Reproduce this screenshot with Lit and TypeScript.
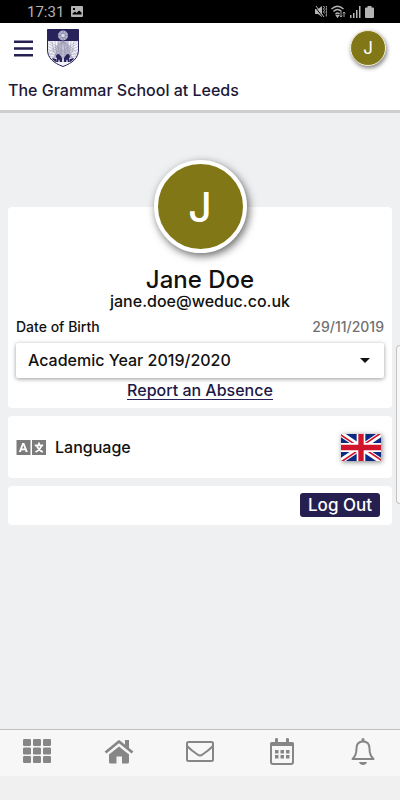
import { LitElement, html, css, svg } from "lit";
import { customElement } from "lit/decorators.js";

const rays = [-11, -8, -5, -2, 2, 5, 8, 11];

@customElement("status-bar")
class StatusBar extends LitElement {
  static styles = css`
    :host {
      display: flex;
      justify-content: space-between;
      align-items: center;
      height: 23px;
      padding: 0 26px 0 27px;
      background: #000;
      color: #b4b4b4;
      font: 15px/23px Roboto, sans-serif;
    }
    .time { padding-top: 2px; line-height: 21px; }
    .left, .right { display: flex; align-items: center; }
    .left { gap: 7px; }
    .right { gap: 4px; }
    svg { display: block; }
  `;
  render() {
    return html`
      <div class="left">
        <span class="time">17:31</span>
        <svg width="12" height="11" viewBox="0 0 12 11">
          <path fill="#b4b4b4" fill-rule="evenodd" d="M1 0h10a1 1 0 0 1 1 1v9a1 1 0 0 1-1 1H1a1 1 0 0 1-1-1V1a1 1 0 0 1 1-1zM1.500 8.500h9V6.500L8 4.500 5.500 7 4 5.500 1.500 7.500zM2 2v2h2V2z"/>
        </svg>
      </div>
      <div class="right">
        <svg width="12" height="13" viewBox="0 0 12 13" fill="#b4b4b4">
          <path d="M0 4h3l4-3v11L3 9H0z"/>
          <path d="M0 2l8 10" stroke="#000" stroke-width="1"/>
          <path d="M1 1l8 11M8.500 1l1 1.500-1 1.500 1 1.500-1 1.500 1 1.500M11 1l.8 1.500L11 4l.8 1.500L11 7l.8 1.500L11 10l.8 1.500" fill="none" stroke="#b4b4b4"/>
        </svg>
        <svg width="15" height="13" viewBox="0 0 15 13" fill="none" stroke="#b4b4b4" stroke-width="1.400">
          <path d="M.5 4q6-5.500 12 0M2.500 6.500q4-4 8 0M4.500 9q2-2 4 0"/>
          <path d="M5.500 10.500h2l-1 1.500z" fill="#b4b4b4"/>
          <path d="M10 7v5M8.800 10.500L10 12l1.200-1.500M13 12V7M11.800 8.500L13 7l1.200 1.500" stroke-width=".9"/>
        </svg>
        <svg width="11" height="12" viewBox="0 0 11 12" fill="#b4b4b4">
          <path d="M0 9h1.500v3H0zM3 7h1.500v5H3zM6 4h1.500v8H6zM9 0h1.500v12H9z"/>
        </svg>
        <svg width="9" height="12" viewBox="0 0 9 12" fill="#b4b4b4">
          <path d="M2.500 0h4v1.500H8a1 1 0 0 1 1 1V11a1 1 0 0 1-1 1H1a1 1 0 0 1-1-1V2.500a1 1 0 0 1 1-1h1.500z"/>
        </svg>
      </div>
    `;
  }
}

@customElement("school-header")
class SchoolHeader extends LitElement {
  static styles = css`
    :host {
      display: block;
      background: #fff;
      border-bottom: 3px solid #cdced0;
      padding: 4px 14px 0 8px;
    }
    .row { display: flex; align-items: center; height: 42px; }
    button { border: 0; background: none; padding: 0; cursor: pointer; display: block; }
    .menu { margin: 0 14px 0 6px; }
    svg { display: block; }
    .avatar {
      margin-left: auto;
      box-sizing: border-box;
      width: 36px;
      height: 36px;
      border: 1px solid #f3f1d8;
      border-radius: 50%;
      background: #827717;
      color: #fff;
      font: 400 17px/34px Inter, sans-serif;
      box-shadow: 1px 2px 4px rgba(0, 0, 0, 0.5);
    }
    h1 {
      margin: 0;
      height: 41px;
      font: 500 16px/42px Inter, sans-serif;
      color: #1c1937;
    }
  `;
  render() {
    return html`
      <div class="row">
        <button class="menu" aria-label="Menu">
          <svg width="19" height="17" viewBox="0 0 19 17" fill="#262050">
            <path d="M0 .5h19V3H0zM0 7.300h19v2.500H0zM0 14h19v2.500H0z"/>
          </svg>
        </button>
        <svg width="32" height="38" viewBox="0 0 32 38" role="img" aria-label="School crest">
          <defs>
            <clipPath id="shield"><path d="M.5.5h31V21c0 8-6 13-15.500 16.500C6.500 34 .5 29 .5 21z"/></clipPath>
          </defs>
          <g clip-path="url(#shield)">
            <path d="M0 0h32v38H0z" fill="#f4f4f8"/>
            <path d="M0 0h32v12H0z" fill="#29235c"/>
            <path d="M11 12h10l4 17H7z" fill="#c9c8d8"/>
            ${rays.map((n) => svg`<path d=${`M${16 + n} 12Q${16 + n} 21 ${16 + n * 0.5} 31M16 12L${16 + n * 2} 30M0 ${22 + n}L16 ${27 + n * 0.5}L32 ${22 + n}`} fill="none" stroke="#8d8aab" stroke-width=".45"/>`)}
            <circle cx="16" cy="6.500" r="5" fill="#b6b4cd"/>
            <path d="M16 1.500v10M11 6.500h10M12.500 3l7 7M19.500 3l-7 7" stroke="#77739a" stroke-width=".7"/>
            <circle cx="16" cy="6.500" r="2.200" fill="#dddce8" stroke="#77739a" stroke-width=".6"/>
            <path d="M9 28c0-3 2-4 4-2l2 3v4h-2l-1-3-1 3H9l1-4zM23 28c0-3-2-4-4-2l-2 3v4h2l1-3 1 3h2l-1-4z" fill="#29235c"/>
            <path d="M5 29l4 1v3l-3-2zM27 29l-4 1v3l3-2z" fill="#29235c"/>
          </g>
          <path d="M.5.5h31V21c0 8-6 13-15.500 16.500C6.500 34 .5 29 .5 21z" fill="none" stroke="#29235c"/>
        </svg>
        <button class="avatar" aria-label="Profile">J</button>
      </div>
      <h1>The Grammar School at Leeds</h1>
    `;
  }
}

@customElement("profile-card")
class ProfileCard extends LitElement {
  static styles = css`
    :host {
      display: block;
      background: #fff;
      border-radius: 4px;
      padding: 0 8px 8px;
      color: #111;
      font-family: Inter, sans-serif;
      font-weight: 500;
      text-align: center;
    }
    .avatar {
      box-sizing: border-box;
      width: 93px;
      height: 93px;
      margin: -47px auto 0;
      border: 4px solid #fff;
      border-radius: 50%;
      background: #827717;
      color: #fff;
      font-size: 41px;
      line-height: 87px;
      box-shadow: 2px 3px 8px rgba(0, 0, 0, 0.6);
    }
    h2 { margin: 13px 0 0; font-size: 24px; line-height: 27px; font-weight: 500; }
    .email { margin: 0; font-size: 16px; line-height: 16px; }
    dl {
      display: flex;
      justify-content: space-between;
      margin: 8px 0 6px;
      font-size: 14px;
      line-height: 20px;
    }
    dt, dd { margin: 0; }
    dd { color: #707070; }
    .year { position: relative; display: block; }
    select {
      display: block;
      width: 100%;
      height: 35px;
      padding: 0 12px 2px;
      border: 0;
      border-radius: 2px;
      appearance: none;
      background: #fff;
      color: #111;
      font: 500 16px/20px Inter, sans-serif;
      box-shadow: 0 1px 4px rgba(0, 0, 0, 0.4);
    }
    .caret { position: absolute; right: 14px; top: 15px; pointer-events: none; }
    a {
      display: inline-block;
      margin-top: 4px;
      border-bottom: 1px solid #29235c;
      color: #1d1845;
      text-decoration: none;
      font-size: 16px;
      line-height: 17px;
    }
    .absence { display: block; height: 22px; }
  `;
  render() {
    return html`
      <div class="avatar">J</div>
      <h2>Jane Doe</h2>
      <p class="email">jane.doe@weduc.co.uk</p>
      <dl><dt>Date of Birth</dt><dd>29/11/2019</dd></dl>
      <div class="year">
        <select aria-label="Academic year"><option>Academic Year 2019/2020</option></select>
        <svg class="caret" width="10" height="5" viewBox="0 0 10 5"><path d="M0 0h10L5 5z" fill="#111"/></svg>
      </div>
      <div class="absence"><a href="#absence">Report an Absence</a></div>
    `;
  }
}

@customElement("language-card")
class LanguageCard extends LitElement {
  static styles = css`
    :host {
      display: flex;
      align-items: center;
      box-sizing: border-box;
      height: 62px;
      padding: 0 11px 0 8px;
      background: #fff;
      border-radius: 4px;
      color: #111;
      font: 500 16px/20px Inter, sans-serif;
    }
    svg { display: block; }
    .label { margin-left: 9px; }
    button {
      margin-left: auto;
      padding: 0;
      border: 0;
      background: none;
      box-shadow: 1px 1px 5px rgba(0, 0, 0, 0.5);
      cursor: pointer;
    }
  `;
  render() {
    return html`
      <svg width="30" height="15" viewBox="0 0 30 15">
        <path d="M.5 0h14v15H.5zM16 0h14v15H16z" fill="#7c7c7c"/>
        <path d="M2.800 12L6.300 3h2l3.500 9H9.600L9 10.200H5.600L5 12zM6.200 8.500h2.200L7.300 5.200z" fill="#fff" fill-rule="evenodd"/>
        <path d="M23 2.500v2.500M18.800 5.300h8.400M25.500 5.500q-1.500 4.500-6 6.500M20.800 6q2 4.500 6 6" fill="none" stroke="#fff" stroke-width="1.800"/>
      </svg>
      <span class="label">Language</span>
      <button aria-label="English (United Kingdom)">
        <svg width="40" height="27" viewBox="0 0 60 40" preserveAspectRatio="none">
          <path fill="#0b2a83" d="M0 0h60v40H0z"/>
          <path d="M0 0l60 40M60 0L0 40" stroke="#fff" stroke-width="8"/>
          <path d="M0 0l30 20-1.500 2L0 3zM60 40L30 20l1.500-2L60 37zM60 0L30 20l-1.500-2L55.500 0zM0 40l30-20 1.500 2L4.500 40z" fill="#cf142b"/>
          <path d="M30 0v40M0 20h60" stroke="#fff" stroke-width="13"/>
          <path d="M30 0v40M0 20h60" stroke="#cf142b" stroke-width="8"/>
        </svg>
      </button>
    `;
  }
}

@customElement("tab-bar")
class TabBar extends LitElement {
  static styles = css`
    :host { display: block; background: #f0f0f0; padding-bottom: 24px; }
    nav {
      display: flex;
      justify-content: space-between;
      height: 46px;
      padding: 0 17px;
      border-top: 1px solid #bdbec0;
      background: #f7f7f7;
    }
    a {
      display: flex;
      box-sizing: border-box;
      width: 40px;
      height: 44px;
      justify-content: center;
      align-items: center;
      padding-bottom: 2px;
    }
    svg { display: block; fill: #868686; }
    .line { fill: none; stroke: #868686; stroke-width: 2; }
  `;
  render() {
    return html`
      <nav aria-label="Main">
        <a href="#apps" aria-label="Apps">
          <svg width="28" height="24" viewBox="0 0 28 24">
            ${[0, 1, 2].map((r) => [0, 1, 2].map((c) => svg`<rect x=${c * 10} y=${r * 8.5} width="8" height="7" rx="1.200"/>`))}
          </svg>
        </a>
        <a href="#home" aria-label="Home">
          <svg width="30" height="25" viewBox="0 0 30 25">
            <path d="M15 7.500L25 15.500V23q0 1.500-1.500 1.500H18V17.500h-5.500v7H6.500Q5 24.500 5 23v-7.500z"/>
            <path d="M1.500 13.500L15 2.500l13.500 11" fill="none" stroke="#f7f7f7" stroke-width="5.500"/>
            <path d="M1.500 13.500L15 2.500l13.500 11" fill="none" stroke="#868686" stroke-width="2.800" stroke-linejoin="round"/>
            <path d="M21 1h4v8.500l-4-3.300z"/>
          </svg>
        </a>
        <a href="#messages" aria-label="Messages">
          <svg width="28" height="21" viewBox="0 0 28 21">
            <rect class="line" x="1" y="1" width="26" height="19" rx="1.500"/>
            <path class="line" d="M1 5Q6 10 11.500 13.500 14 15.500 16.500 13.500 22 10 27 5"/>
          </svg>
        </a>
        <a href="#calendar" aria-label="Calendar">
          <svg width="24" height="27" viewBox="0 0 24 27">
            <rect class="line" x="1" y="5" width="22" height="21" rx="2"/>
            <path d="M0 8V6q0-2 2-2h3V1q0-1 1.500-1T8 1v3h8V1q0-1 1.500-1T19 1v3h3q2 0 2 2v2z"/>
            ${[0, 1].map((r) => [0, 1, 2].map((c) => svg`<rect x=${5 + c * 5.5} y=${12 + r * 5} width="3.500" height="3.500"/>`))}
          </svg>
        </a>
        <a href="#alerts" aria-label="Notifications">
          <svg width="24" height="27" viewBox="0 0 24 27">
            <path class="line" stroke-linejoin="round" d="M1.500 21Q5.500 17.500 5.500 10.500 5.500 3.500 12 3.500t6.500 7Q18.500 17.500 22.500 21z"/>
            <path d="M10.500 4V1.500q0-1.500 1.500-1.500t1.500 1.500V4zM8 24h8q-1 3-4 3t-4-3z"/>
          </svg>
        </a>
      </nav>
    `;
  }
}

@customElement("app-root")
class AppRoot extends LitElement {
  static styles = css`
    :host {
      display: flex;
      flex-direction: column;
      position: relative;
      min-height: 100vh;
      background: #eff0f2;
      font-family: Inter, sans-serif;
    }
    main {
      flex: 1;
      display: flex;
      flex-direction: column;
      gap: 8px;
      padding: 94px 8px 8px;
    }
    .logout {
      display: flex;
      justify-content: flex-end;
      padding: 7px 12px 8px;
      background: #fff;
      border-radius: 4px;
    }
    .logout button {
      height: 24px;
      padding: 0 8px;
      border: 0;
      border-radius: 3px;
      background: #262050;
      color: #fff;
      font: 500 17px/24px Inter, sans-serif;
      cursor: pointer;
    }
    .edge {
      position: absolute;
      right: 0;
      top: 345px;
      width: 3px;
      height: 157px;
      border: 1px solid #c4c4c4;
      border-right: 0;
      border-radius: 4px 0 0 4px;
      background: #f8f8f8;
    }
  `;
  render() {
    return html`
      <status-bar></status-bar>
      <school-header></school-header>
      <main>
        <profile-card></profile-card>
        <language-card></language-card>
        <div class="logout"><button>Log Out</button></div>
      </main>
      <tab-bar></tab-bar>
      <div class="edge"></div>
    `;
  }
}
